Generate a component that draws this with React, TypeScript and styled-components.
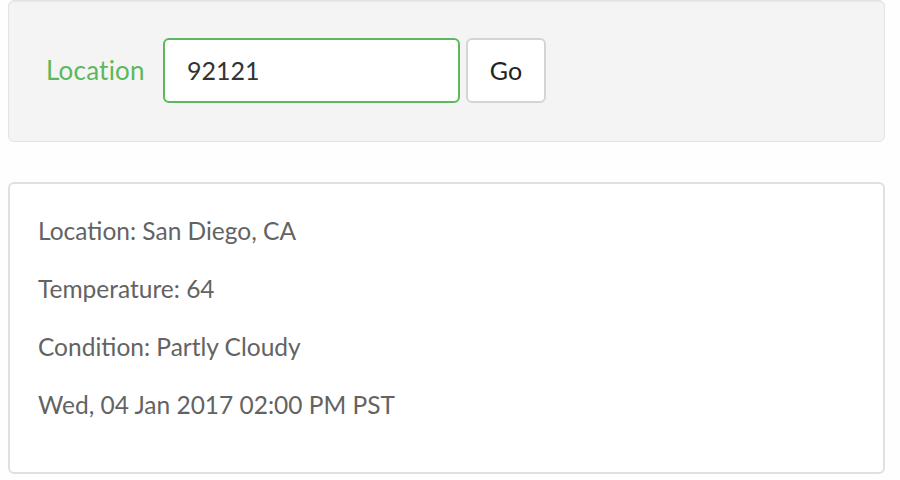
import React from "react";
import styled, { createGlobalStyle } from "styled-components";

const GlobalStyle = createGlobalStyle`
  html, body { margin: 0; padding: 0; background: #fefefe; }
  body { font-family: Lato, "Noto Sans", sans-serif; }
`;

const Page = styled.div`
  width: 877px;
  margin-left: 8px;
  display: flex;
  flex-direction: column;
  gap: 40px;
`;

const Well = styled.form`
  box-sizing: border-box;
  height: 142px;
  background: #f4f4f4;
  border: 1px solid #e3e3e3;
  border-radius: 6px;
  box-shadow: inset 0 1px 1px rgba(0, 0, 0, 0.05);
  display: flex;
  align-items: center;
  padding: 0 0 2px 37px;
`;

const Label = styled.label`
  color: #5cb85c;
  font-size: 26px;
  letter-spacing: 0.2px;
  width: 117px;
  flex: none;
`;

const Input = styled.input`
  box-sizing: border-box;
  width: 297px;
  height: 65px;
  border: 2px solid #5cb85c;
  border-radius: 6px;
  background: #fff;
  padding: 0 22px;
  font-family: Lato, "Noto Sans", sans-serif;
  font-size: 25px;
  color: #333;
  outline: none;
  margin-right: 6px;
`;

const Button = styled.button`
  box-sizing: border-box;
  width: 80px;
  height: 65px;
  border: 2px solid #d4d4d4;
  border-radius: 6px;
  background: #fff;
  font-family: Lato, "Noto Sans", sans-serif;
  font-size: 25px;
  color: #222;
`;

const Panel = styled.div`
  box-sizing: border-box;
  height: 292px;
  border: 2px solid #e0e0e0;
  border-radius: 6px;
  background: #fff;
  padding: 18px 28px 0;
`;

const Line = styled.p`
  margin: 0;
  line-height: 58px;
  font-size: 24.5px;
  color: #636363;
`;

export default function App() {
  return (
    <>
      <GlobalStyle />
      <Page>
        <Well onSubmit={(e) => e.preventDefault()}>
          <Label>Location</Label>
          <Input defaultValue="92121" />
          <Button type="submit">Go</Button>
        </Well>
        <Panel>
          <Line>Location: San Diego, CA</Line>
          <Line>Temperature: 64</Line>
          <Line>Condition: Partly Cloudy</Line>
          <Line>Wed, 04 Jan 2017 02:00 PM PST</Line>
        </Panel>
      </Page>
    </>
  );
}
